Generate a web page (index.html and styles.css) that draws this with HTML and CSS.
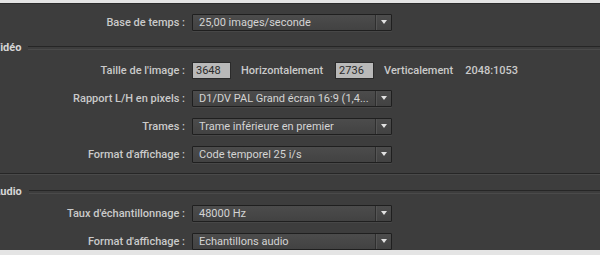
FILE: index.html
```html
<!DOCTYPE html>
<html lang="fr">
<head>
    <meta charset="UTF-8">
    <title>Paramètres de la séquence</title>
    <link rel="stylesheet" href="styles.css">
</head>
<body>
    <div class="settings-panel">
        <div class="settings-row">
            <label class="settings-label">Base de temps :</label>
            <div class="dropdown"><span class="dropdown-value">25,00 images/seconde</span><span class="dropdown-arrow"></span></div>
        </div>

        <div class="section-title"><span>Vidéo</span></div>

        <div class="settings-row">
            <label class="settings-label">Taille de l'image :</label>
            <div class="size-group">
                <input class="size-input" type="text" value="3648">
                <span class="size-label">Horizontalement</span>
                <input class="size-input" type="text" value="2736">
                <span class="size-label">Verticalement</span>
                <span class="size-ratio">2048:1053</span>
            </div>
        </div>
        <div class="settings-row">
            <label class="settings-label">Rapport L/H en pixels :</label>
            <div class="dropdown"><span class="dropdown-value">D1/DV PAL Grand écran 16:9 (1,4...</span><span class="dropdown-arrow"></span></div>
        </div>
        <div class="settings-row">
            <label class="settings-label">Trames :</label>
            <div class="dropdown"><span class="dropdown-value">Trame inférieure en premier</span><span class="dropdown-arrow"></span></div>
        </div>
        <div class="settings-row">
            <label class="settings-label">Format d'affichage :</label>
            <div class="dropdown"><span class="dropdown-value">Code temporel 25 i/s</span><span class="dropdown-arrow"></span></div>
        </div>

        <div class="group-separator"></div>

        <div class="section-title section-audio"><span>Audio</span></div>

        <div class="settings-row">
            <label class="settings-label">Taux d'échantillonnage :</label>
            <div class="dropdown"><span class="dropdown-value">48000 Hz</span><span class="dropdown-arrow"></span></div>
        </div>
        <div class="settings-row">
            <label class="settings-label">Format d'affichage :</label>
            <div class="dropdown"><span class="dropdown-value">Echantillons audio</span><span class="dropdown-arrow"></span></div>
        </div>
    </div>
</body>
</html>
```
FILE: styles.css
```css
:root {
    --panel-bg: #3d3d3d;
    --panel-dark: #262626;
    --panel-light: #4a4a4a;
    --label-color: #cacaca;
    --value-color: #d4d4d4;
}

* {
    margin: 0;
    padding: 0;
    box-sizing: border-box;
    font-family: Roboto, 'Liberation Sans', sans-serif;
}

body {
    background-color: #e4e4e4;
    height: 255px;
    overflow: hidden;
}

.settings-panel {
    margin-top: 3px;
    height: 247px;
    overflow: hidden;
    background-color: var(--panel-bg);
    border-top: 1px solid #2c2c2c;
    padding-top: 4px;
}

.settings-row {
    height: 28px;
    display: flex;
    align-items: center;
}

.settings-label {
    width: 192px;
    padding-right: 7px;
    text-align: right;
    color: var(--label-color);
    font-size: 11px;
    font-weight: 500;
    white-space: nowrap;
}

.dropdown {
    width: 200px;
    height: 17px;
    display: flex;
    align-items: stretch;
    border: 1px solid #1f1f1f;
    border-radius: 1px;
    background: linear-gradient(#4c4c4c, #424242);
    box-shadow: 0 1px 0 #474747;
}

.dropdown-value {
    flex: 1;
    padding-left: 6px;
    color: var(--value-color);
    font-size: 11px;
    line-height: 15px;
    white-space: nowrap;
    overflow: hidden;
}

.dropdown-arrow {
    width: 16px;
    border-left: 1px solid #2e2e2e;
    box-shadow: inset 1px 0 0 #555;
    display: flex;
    align-items: center;
    justify-content: center;
}

.dropdown-arrow::after {
    content: '';
    border-left: 3px solid transparent;
    border-right: 3px solid transparent;
    border-top: 4px solid #e2e2e2;
}

.size-group {
    display: flex;
    align-items: center;
}

.size-input {
    width: 39px;
    height: 17px;
    border: 1px solid #2a2a2a;
    background-color: #b9b9b9;
    color: #2a2a2a;
    font-size: 11px;
    padding-left: 3px;
    outline: none;
}

.size-label {
    margin: 0 12px 0 10px;
    color: var(--label-color);
    font-size: 11px;
    font-weight: 500;
}

.size-ratio {
    color: var(--label-color);
    font-size: 11px;
    font-weight: 500;
}

.section-title {
    height: 20px;
    padding-top: 3px;
    display: flex;
    align-items: center;
    margin-left: -7px;
}

.section-title span {
    color: #d6d6d6;
    font-size: 11px;
    font-weight: 700;
    margin-right: 7px;
}

.section-title::after {
    content: '';
    flex: 1;
    height: 2px;
    border-top: 1px solid var(--panel-dark);
    border-bottom: 1px solid var(--panel-light);
}

.group-separator {
    margin-top: 5px;
    height: 2px;
    border-top: 1px solid var(--panel-dark);
    border-bottom: 1px solid var(--panel-light);
}

.section-audio {
    height: 24px;
    padding-top: 9px;
}
```
